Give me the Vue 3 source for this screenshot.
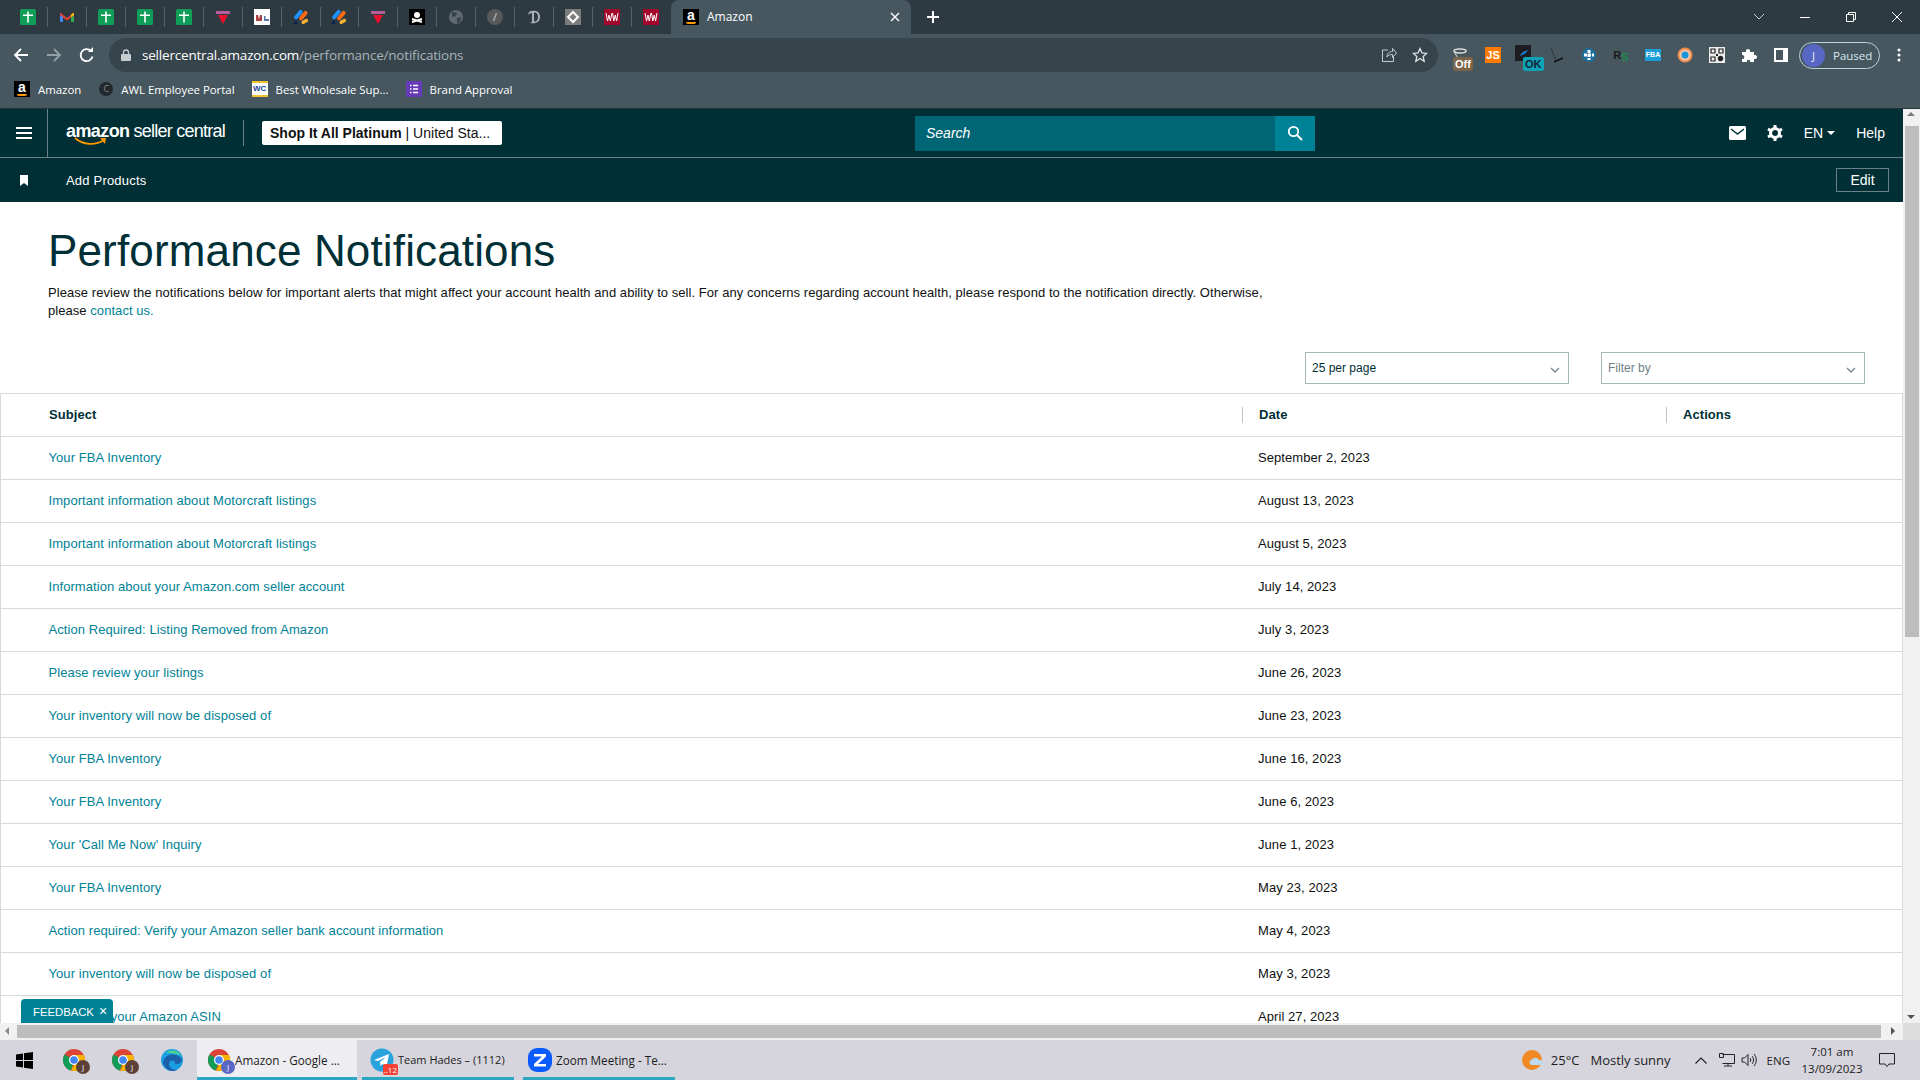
<template>
  <div class="screen">
    <!-- browser chrome -->
    <div class="tabstrip">
      <div class="pinned">
        <div v-for="(t, i) in pinnedTabs" :key="i" class="pin">
          <svg width="16" height="16" viewBox="0 0 16 16">
            <template v-if="t === 'sheet'">
              <rect width="16" height="16" rx="1.5" fill="#0f9d58" />
              <path d="M7.200 2.500h1.600v3H13v1.600H8.800v6.400H7.200V7.100H3V5.500h4.200z" fill="#fff" />
            </template>
            <template v-else-if="t === 'gmail'">
              <path d="M1 4v9h3V7z" fill="#4285f4" /><path d="M15 4v9h-3V7z" fill="#34a853" />
              <path d="M1 3.500 8 9l7-5.500V6L8 11.500 1 6z" fill="#ea4335" />
              <path d="M12 5.500 15 3.500V6l-3 2.300z" fill="#fbbc04" />
            </template>
            <template v-else-if="t === 'tri'">
              <rect x="1" y="2" width="14" height="3" fill="#b45f9a" />
              <path d="M3 6h10l-5 9z" fill="#e8112d" />
            </template>
            <template v-else-if="t === 'wl'">
              <rect width="16" height="16" fill="#fff" />
              <path d="M2 6h2l1 4 1-4h2v6H2z" fill="#a44" /><path d="M10 7h1.500v3H15v2h-5z" fill="#57a" />
            </template>
            <template v-else-if="t === 'jira'">
              <rect x="0" y="4" width="11" height="4" rx="2" transform="rotate(-50 5 6)" fill="#1e90ff" />
              <rect x="5" y="5" width="11" height="4" rx="2" transform="rotate(-50 10 7)" fill="#ff6a13" />
              <rect x="8" y="11" width="7" height="3.500" rx="1.700" transform="rotate(-30 11 12)" fill="#f9b233" />
              <path d="M0 15l3-4 2 4z" fill="#10204f" />
            </template>
            <template v-else-if="t === 'skull'">
              <rect width="16" height="16" fill="#000" />
              <circle cx="8" cy="6" r="3" fill="#fff" /><path d="M3 10l10 3M13 10L3 13" stroke="#fff" stroke-width="2" />
            </template>
            <template v-else-if="t === 'globe'">
              <circle cx="8" cy="8" r="7" fill="#5f6a70" />
              <path d="M4 3l5 1-1 3-4 1zM9 9l4-1-1 5-3 1z" fill="#36434a" />
            </template>
            <template v-else-if="t === 'ital'">
              <circle cx="8" cy="8" r="8" fill="#57595a" /><path d="M9.500 4 6.500 12" stroke="#aaa" stroke-width="1.400" />
            </template>
            <template v-else-if="t === 'dee'">
              <path d="M5 2c6-1 9 1 9 6s-4 7-10 6l2-1V4C4 4 3 5 2.500 6 2 4 3 2.500 5 2z" fill="#aab2b6" />
              <path d="M8 3.500v9c3 0 4-2 4-4.500S11 3.500 8 3.500z" fill="#2e3a41" />
            </template>
            <template v-else-if="t === 'diamond'">
              <rect width="16" height="16" fill="#7c7c7c" />
              <path d="M8 3l5 5-5 5-5-5z" fill="none" stroke="#fff" stroke-width="2" />
            </template>
            <template v-else-if="t === 'vw'">
              <rect width="16" height="16" fill="#a3082c" />
              <path d="M2 4l1.500 8L5 6l1.300 6L8 4M8.500 4l1.300 8 1.500-6 1.300 6L14 4" stroke="#fff" stroke-width="1" fill="none" />
            </template>
          </svg>
        </div>
      </div>
      <div class="tab-active">
        <span class="a-fav"><b>a</b><i></i></span>
        <span class="tab-title">Amazon</span>
        <svg class="tab-close" width="10" height="10" viewBox="0 0 10 10"><path d="M1 1l8 8M9 1l-8 8" stroke="#fff" stroke-width="1.400" /></svg>
      </div>
      <svg class="tab-new" width="14" height="14" viewBox="0 0 14 14"><path d="M7 1v12M1 7h12" stroke="#fff" stroke-width="2" /></svg>
      <div class="win-controls">
        <svg width="46" height="14" viewBox="0 0 46 14"><path d="M18 4l5 5 5-5" stroke="#c6ccd0" fill="none" /></svg>
        <svg width="46" height="14" viewBox="0 0 46 14"><path d="M18 7.500h10" stroke="#fff" /></svg>
        <svg width="46" height="14" viewBox="0 0 46 14"><path d="M18.500 4.500h7v7h-7zM20.500 4.500v-2h7v7h-2" stroke="#fff" fill="none" /></svg>
        <svg width="46" height="14" viewBox="0 0 46 14"><path d="M18 2l10 10M28 2L18 12" stroke="#fff" /></svg>
      </div>
    </div>

    <div class="toolbar">
      <div class="nav-btns">
        <svg width="16" height="16" viewBox="0 0 16 16"><path d="M15 8H2M8 2L2 8l6 6" stroke="#fff" stroke-width="1.800" fill="none" /></svg>
        <svg width="16" height="16" viewBox="0 0 16 16"><path d="M1 8h13M8 2l6 6-6 6" stroke="#93a0a6" stroke-width="1.800" fill="none" /></svg>
        <svg width="16" height="16" viewBox="0 0 16 16"><path d="M13.500 9.500A6 6 0 1 1 12 4" stroke="#fff" stroke-width="1.800" fill="none" /><path d="M9 5h5V0z" fill="#fff" /></svg>
      </div>
      <div class="omnibox">
        <svg class="lock" width="10" height="12" viewBox="0 0 10 12"><path d="M2.500 5V3.500a2.500 2.500 0 0 1 5 0V5" stroke="#c5ccd0" fill="none" stroke-width="1.300" /><rect y="5" width="10" height="7" rx="1" fill="#c5ccd0" /></svg>
        <span class="url"><span class="url-host">sellercentral.amazon.com</span>/performance/notifications</span>
        <svg class="omni-ico" width="16" height="16" viewBox="0 0 16 16"><path d="M7 3H1.500v11.500h11V10M6 10c0-4 2.500-5.500 5.500-5.500V1.500L15.500 6l-4 4.500V7.500C9 7.500 7 8 6 10z" stroke="#c5ccd0" fill="none" /></svg>
        <svg class="omni-ico" width="16" height="16" viewBox="0 0 16 16"><path d="M8 1.500l2 4.400 4.700.5-3.500 3.200 1 4.700L8 11.500l-4.200 2.800 1-4.700L1.300 6.400 6 5.900z" stroke="#dfe3e5" stroke-width="1.300" fill="none" /></svg>
      </div>
      <div class="ext-row">
        <div class="ext"><svg width="16" height="16" viewBox="0 0 16 16"><ellipse cx="7" cy="4" rx="6" ry="2" fill="none" stroke="#ddd" stroke-width="1.500" /><path d="M1 5l4 6h4" stroke="#ddd" fill="none" /></svg><span class="ext-badge off">Off</span></div>
        <div class="ext js">JS</div>
        <div class="ext"><span class="ok-sq"><svg width="16" height="16" viewBox="0 0 16 16"><path d="M5 11c1-3 4-5 8-6-2 3-4 5-8 6z" fill="#1f7fd0" /></svg></span><span class="ext-badge ok">OK</span></div>
        <div class="ext"><svg width="16" height="16" viewBox="0 0 16 16"><path d="M2 1l5 13" stroke="#333" /><path d="M5 15l9-4" stroke="#111" stroke-width="1.500" /></svg></div>
        <div class="ext"><svg width="16" height="16" viewBox="0 0 16 16"><circle cx="8" cy="8" r="7" fill="#1f6d9b" /><path d="M8 3v10M3 8h10" stroke="#fff" stroke-width="3" stroke-dasharray="3 1" /></svg></div>
        <div class="ext rs">R<em>S</em></div>
        <div class="ext fba">FBA</div>
        <div class="ext"><svg width="16" height="16" viewBox="0 0 16 16"><circle cx="8" cy="8" r="7.500" fill="#ee8c50" /><circle cx="8" cy="8" r="5.500" fill="#f3c7a8" /><circle cx="8" cy="8" r="3.500" fill="#1c95d8" /></svg></div>
        <div class="ext"><svg width="16" height="16" viewBox="0 0 16 16"><rect width="16" height="16" fill="#eee" /><path d="M2 2h4v4H2zM10 2h4v4h-4zM2 10h4v4H2z" fill="none" stroke="#222" stroke-width="1.200" /><circle cx="11.500" cy="11.500" r="2.700" fill="#222" /><path d="M7 7h2v2H7z" fill="#222" /></svg></div>
        <div class="ext"><svg width="16" height="16" viewBox="0 0 16 16"><path d="M1 5h4c-1-4 5-4 4 0h4v3c4-1 4 5 0 4v3H9c1-3-4-3-3 0H1v-3c3 1 3-5 0-4z" fill="#fff" /></svg></div>
        <div class="ext"><svg width="14" height="14" viewBox="0 0 14 14"><rect width="14" height="14" fill="#fff" /><rect x="2" y="2" width="7" height="10" fill="#46575f" /></svg></div>
      </div>
      <div class="paused"><span class="avatar">J</span><span>Paused</span></div>
      <svg class="kebab" width="4" height="14" viewBox="0 0 4 14"><circle cx="2" cy="2" r="1.500" fill="#fff" /><circle cx="2" cy="7" r="1.500" fill="#fff" /><circle cx="2" cy="12" r="1.500" fill="#fff" /></svg>
    </div>

    <div class="bookmarks">
      <div class="bm"><span class="a-fav"><b>a</b><i></i></span>Amazon</div>
      <div class="bm"><span class="bm-c">C</span>AWL Employee Portal</div>
      <div class="bm"><span class="bm-wc">WC</span>Best Wholesale Sup...</div>
      <div class="bm">
        <svg width="16" height="16" viewBox="0 0 16 16"><rect width="16" height="16" rx="1" fill="#673ab7" /><path d="M7 4.500h5M7 8h5M7 11.500h5M4 4.500h1.500M4 8h1.500M4 11.500h1.500" stroke="#fff" stroke-width="1.500" /></svg>
        Brand Approval
      </div>
    </div>

    <!-- web page -->
    <div class="viewport">
      <div class="page-wrap">
        <main class="page">
          <header class="topbar">
            <div class="hamburger">
              <svg width="16" height="14" viewBox="0 0 16 14"><path d="M0 2h16M0 7h16M0 12h16" stroke="#fff" stroke-width="2" /></svg>
            </div>
            <div class="logo">
              <span class="logo-amz">amazon<svg class="smile" width="34" height="9" viewBox="0 0 34 9"><path d="M1 1c8 7 20 8 29 2" stroke="#f90" stroke-width="1.800" fill="none" /><path d="M26 1l6 0-1 6z" fill="#f90" /></svg></span>
              <span class="logo-sc">seller central</span>
            </div>
            <div class="topbar-div"></div>
            <div class="account"><b>Shop It All Platinum</b> | United Sta...</div>
            <div class="search">
              <span class="search-input">Search</span>
              <span class="search-btn"><svg width="16" height="16" viewBox="0 0 16 16"><circle cx="6.500" cy="6.500" r="4.700" stroke="#fff" stroke-width="1.800" fill="none" /><path d="M10 10l5 5" stroke="#fff" stroke-width="2" /></svg></span>
            </div>
            <div class="top-right">
              <svg width="17" height="14" viewBox="0 0 17 14"><rect width="17" height="14" rx="1.500" fill="#fff" /><path d="M2 3l6.500 5L15 3" stroke="#002f36" stroke-width="1.400" fill="none" /></svg>
              <svg width="18" height="18" viewBox="0 0 18 18"><circle cx="9" cy="9" r="4.500" fill="none" stroke="#fff" stroke-width="3" /><path d="M9 1v3M9 14v3M2 5l2.600 1.500M13.400 11.500 16 13M2 13l2.600-1.500M13.400 6.500 16 5" stroke="#fff" stroke-width="3" /></svg>
              <span class="lang">EN<i class="caret"></i></span>
              <span>Help</span>
            </div>
          </header>
          <nav class="subnav">
            <svg class="bookmark" width="8" height="11" viewBox="0 0 8 11"><path d="M0 0h8v11L4 8l-4 3z" fill="#fff" /></svg>
            <span class="add-products">Add Products</span>
            <span class="edit">Edit</span>
          </nav>

          <section class="intro">
            <h1>Performance Notifications</h1>
            <p>
              Please review the notifications below for important alerts that might affect your account health and ability to sell. For any concerns regarding account health, please respond to the notification directly. Otherwise, please
              <a>contact us.</a>
            </p>
          </section>

          <div class="filters">
            <div class="select">25 per page<svg width="10" height="6" viewBox="0 0 10 6"><path d="M1 1l4 4 4-4" stroke="#7c9095" stroke-width="1.500" fill="none" /></svg></div>
            <div class="select muted">Filter by<svg width="10" height="6" viewBox="0 0 10 6"><path d="M1 1l4 4 4-4" stroke="#7c9095" stroke-width="1.500" fill="none" /></svg></div>
          </div>

          <div class="table">
            <div class="row head">
              <div class="cell">Subject</div>
              <div class="cell"><span class="th-line">Date</span></div>
              <div class="cell"><span class="th-line">Actions</span></div>
            </div>
            <div v-for="(n, i) in notifications" :key="i" class="row">
              <div class="cell"><a>{{ n.subject }}</a></div>
              <div class="cell">{{ n.date }}</div>
              <div class="cell"></div>
            </div>
          </div>
        </main>
        <div class="vscroll">
          <i class="arrow up"></i>
          <div class="vthumb"></div>
          <i class="arrow down"></i>
        </div>
        <div class="feedback">FEEDBACK <span>×</span></div>
      </div>
      <div class="hscroll">
        <i class="arrow left"></i>
        <div class="hthumb"></div>
        <i class="arrow right"></i>
        <div class="corner"></div>
      </div>
    </div>

    <!-- windows taskbar -->
    <footer class="taskbar">
      <svg class="win-logo" width="17" height="17" viewBox="0 0 17 17"><path d="M0 2.500 7 1.500v6.500H0zM8 1.300 17 0v8H8zM0 9h7v6.500L0 14.500zM8 9h9v8L8 15.700z" fill="#000" /></svg>
      <span class="tb-icon"><svg width="24" height="24" viewBox="0 0 24 24"><use href="#chrome-ico" /></svg><span class="tb-av brown">J</span></span>
      <span class="tb-icon"><svg width="24" height="24" viewBox="0 0 24 24"><use href="#chrome-ico" /></svg><span class="tb-av brown">J</span></span>
      <span class="tb-icon">
        <svg width="24" height="24" viewBox="0 0 24 24"><circle cx="12" cy="12" r="11" fill="#1b9de2" /><path d="M3 15c1-9 12-11 18-5 2 3 0 6-4 6-3 0-3-2-2-3-4-2-8 2-5 6 1 2 4 3 7 3-6 3-12-1-14-7z" fill="#1a5fa8" /><path d="M6 5c5-4 12-3 15 3-4-3-11-3-15-3z" fill="#4fd28a" /></svg>
      </span>
      <div class="tb-app active">
        <span class="tb-icon small"><svg width="24" height="24" viewBox="0 0 24 24"><use href="#chrome-ico" /></svg><span class="tb-av">J</span></span>
        <span>Amazon - Google ...</span>
      </div>
      <div class="tb-app tele">
        <span class="tb-icon small">
          <svg width="24" height="24" viewBox="0 0 24 24"><circle cx="12" cy="12" r="11.500" fill="#2aa3dc" /><path d="M4 12l15-6-2.500 13-4-3-2 2-.5-4 6-5-8 4z" fill="#fff" /></svg>
          <span class="tb-count">..12</span>
        </span>
        <span>Team Hades – (1112)</span>
      </div>
      <div class="tb-app zoom">
        <span class="tb-icon small">
          <svg width="24" height="24" viewBox="0 0 24 24"><rect width="24" height="24" rx="9" fill="#0b5cff" /><path d="M6 6h12v2.500L10 16h8v2.500H6V16l8-7.500H6z" fill="#fff" /></svg>
        </span>
        <span>Zoom Meeting - Te...</span>
      </div>
      <div class="tray">
        <svg width="22" height="22" viewBox="0 0 22 22"><circle cx="11" cy="11" r="10" fill="#f08a24" /><path d="M10 16a3 3 0 0 1 1-5.500 4 4 0 0 1 7 0.500 3 3 0 0 1 3 5z" fill="#bcd9ef" /></svg>
        <span class="temp">25°C</span>
        <span class="sky">Mostly sunny</span>
        <svg class="t-chev" width="12" height="7" viewBox="0 0 12 7"><path d="M0.500 6.500 6 1l5.500 5.500" stroke="#222" stroke-width="1.200" fill="none" /></svg>
        <svg class="t-net" width="16" height="14" viewBox="0 0 16 14"><path d="M3.500 1.500h12v9h-12M9 10.500v2M5 13h8M.5.500h4v4h-4z" stroke="#222" fill="none" /></svg>
        <svg class="t-vol" width="16" height="14" viewBox="0 0 16 14"><path d="M1 5h2.500L7 1.500v11L3.500 9H1zM9 5c1 1 1 3 0 4M11 3c2 2 2 6 0 8M13 1c3 3 3 9 0 12" stroke="#222" fill="none" /></svg>
        <span class="eng">ENG</span>
        <div class="clock"><span>7:01 am</span><span>13/09/2023</span></div>
        <svg class="t-note" width="16" height="15" viewBox="0 0 16 15"><path d="M.5.500h15v10.500H10L8 13.500 6 11H.5z" stroke="#222" fill="none" /></svg>
      </div>
    </footer>

    <svg width="0" height="0" class="defs">
      <defs>
        <g id="chrome-ico">
          <circle cx="12" cy="12" r="11" fill="#db4437" />
          <path d="M12 12 2.500 6.500A11 11 0 0 0 9 22.600z" fill="#0f9d58" />
          <path d="M12 7h9.700A11 11 0 0 1 9 22.600L14 13z" fill="#f4b400" />
          <circle cx="12" cy="12" r="5" fill="#fff" />
          <circle cx="12" cy="12" r="3.800" fill="#4285f4" />
        </g>
      </defs>
    </svg>
  </div>
</template>

<script setup>
const pinnedTabs = ['sheet', 'gmail', 'sheet', 'sheet', 'sheet', 'tri', 'wl', 'jira', 'jira', 'tri', 'skull', 'globe', 'ital', 'dee', 'diamond', 'vw', 'vw']

const notifications = [
  { subject: 'Your FBA Inventory', date: 'September 2, 2023' },
  { subject: 'Important information about Motorcraft listings', date: 'August 13, 2023' },
  { subject: 'Important information about Motorcraft listings', date: 'August 5, 2023' },
  { subject: 'Information about your Amazon.com seller account', date: 'July 14, 2023' },
  { subject: 'Action Required: Listing Removed from Amazon', date: 'July 3, 2023' },
  { subject: 'Please review your listings', date: 'June 26, 2023' },
  { subject: 'Your inventory will now be disposed of', date: 'June 23, 2023' },
  { subject: 'Your FBA Inventory', date: 'June 16, 2023' },
  { subject: 'Your FBA Inventory', date: 'June 6, 2023' },
  { subject: "Your 'Call Me Now' Inquiry", date: 'June 1, 2023' },
  { subject: 'Your FBA Inventory', date: 'May 23, 2023' },
  { subject: 'Action required: Verify your Amazon seller bank account information', date: 'May 4, 2023' },
  { subject: 'Your inventory will now be disposed of', date: 'May 3, 2023' },
  { subject: 'Issue with your Amazon ASIN', date: 'April 27, 2023' },
]
</script>

<style>
html, body { margin: 0; overflow: hidden; }
</style>

<style scoped>
.screen {
  width: 1920px;
  height: 1080px;
  display: flex;
  flex-direction: column;
  overflow: hidden;
  font-family: "Liberation Sans", Arial, sans-serif;
  background: #fff;
}
.defs { position: absolute; }

/* chrome */
.tabstrip {
  height: 34px;
  flex: none;
  background: #2e3a41;
  display: flex;
  align-items: center;
}
.pinned { display: flex; padding-left: 9px; width: 671px; box-sizing: border-box; }
.pin {
  width: 39px;
  height: 20px;
  display: flex;
  align-items: center;
  justify-content: center;
  border-right: 1px solid #56636a;
  box-sizing: border-box;
}
.pin:last-child { border-right: none; }
.tab-active {
  width: 240px;
  height: 34px;
  background: #46575f;
  border-radius: 8px 8px 0 0;
  display: flex;
  align-items: center;
  padding-left: 12px;
  box-sizing: border-box;
  color: #fff;
  font: 12px "Open Sans", sans-serif;
}
.tab-title { margin-left: 8px; flex: 1; padding-bottom: 2px; }
.tab-close { margin-right: 11px; }
.tab-new { margin-left: 15px; }
.win-controls { margin-left: auto; display: flex; }
.a-fav {
  width: 16px;
  height: 16px;
  background: #000;
  color: #fff;
  display: inline-block;
  position: relative;
  font: bold 14px/13px "Liberation Sans", sans-serif;
  text-align: center;
  flex: none;
}
.a-fav b { display: block; font-weight: bold; }
.a-fav i {
  position: absolute;
  left: 3px;
  right: 3px;
  bottom: 1px;
  height: 2px;
  background: #f90;
  border-radius: 0 0 6px 6px;
}
.toolbar {
  height: 38px;
  flex: none;
  box-sizing: border-box;
  background: #46575f;
  display: flex;
  align-items: center;
  padding-top: 4px;
}
.nav-btns { display: flex; gap: 17px; width: 109px; padding-left: 13px; box-sizing: border-box; }
.omnibox {
  width: 1329px;
  height: 34px;
  border-radius: 17px;
  background: #36444b;
  display: flex;
  align-items: center;
  box-sizing: border-box;
  padding-left: 12px;
  padding-right: 10px;
}
.lock { margin-right: 11px; }
.url { font: 13.5px/32px "Open Sans", sans-serif; color: #a9b3b8; flex: 1; letter-spacing: -0.2px; }
.url-host { color: #fff; }
.omni-ico { margin-left: 15px; }
.ext-row { display: flex; margin-left: 7px; }
.ext {
  width: 32px;
  height: 32px;
  position: relative;
  display: flex;
  align-items: center;
  justify-content: center;
}
.ext-badge {
  position: absolute;
  left: 10px;
  bottom: 0;
  font: bold 11px/14px "Liberation Sans", sans-serif;
  color: #fff;
  padding: 0 2px;
  border-radius: 2px;
}
.ext-badge.off { background: #7b6448; left: 8px; }
.ext-badge.ok { background: #0fa3b8; color: #123; left: 14px; }
.ok-sq { width: 16px; height: 16px; background: #1c1c22; margin-top: -4px; margin-right: 4px; }
.js {
  font: bold 11px/16px "Liberation Sans", sans-serif;
  color: #fff;
  background: #ff7b00 content-box;
  padding: 8px;
  box-sizing: border-box;
  text-align: center;
}
.rs { font: bold 11px "Liberation Sans", sans-serif; color: #1a1a1a; }
.rs em { color: #1c8a4d; font-style: normal; margin-top: 4px; }
.fba {
  font: bold 7px/12px "Liberation Sans", sans-serif;
  color: #fff;
  background: #1c9fd8 content-box;
  padding: 10px 8px;
  box-sizing: border-box;
}
.paused {
  margin-left: 2px;
  width: 81px;
  height: 27px;
  box-sizing: border-box;
  border: 1px solid #b8d6e2;
  border-radius: 14px;
  display: flex;
  align-items: center;
  gap: 8px;
  padding-left: 2px;
  color: #d8e8ef;
  font: 11.5px "Open Sans", sans-serif;
}
.avatar {
  width: 23px;
  height: 23px;
  border-radius: 50%;
  background: #5866c4;
  color: #e6e8f8;
  text-align: center;
  line-height: 23px;
}
.kebab { margin-left: 17px; }
.bookmarks {
  height: 37px;
  flex: none;
  box-sizing: border-box;
  background: #46575f;
  border-bottom: 1px solid #23333a;
  display: flex;
  align-items: center;
  padding-left: 14px;
  padding-bottom: 2px;
  color: #fff;
  font: 11.4px "Open Sans", sans-serif;
}
.bm { display: flex; align-items: center; gap: 8px; margin-right: 17px; }
.bm-c {
  width: 14px;
  height: 14px;
  border-radius: 50%;
  background: #22292e;
  color: #888;
  font-size: 9px;
  line-height: 14px;
  text-align: center;
  margin-left: 1px;
}
.bm-wc {
  width: 16px;
  height: 16px;
  box-sizing: border-box;
  background: #fff;
  border-top: 2px solid #f2c230;
  border-bottom: 2px solid #f2c230;
  color: #1a3f95;
  font: bold 8px/12px "Liberation Sans", sans-serif;
  text-align: center;
}

/* page */
.viewport { flex: 1; min-height: 0; display: flex; flex-direction: column; }
.page-wrap { flex: 1; min-height: 0; display: flex; position: relative; }
.page { flex: 1; min-width: 0; overflow: hidden; }
.topbar {
  height: 49px;
  box-sizing: border-box;
  background: #002f36;
  border-bottom: 1px solid #6b8086;
  display: flex;
  align-items: center;
  color: #fff;
}
.hamburger {
  width: 48px;
  height: 48px;
  box-sizing: border-box;
  border-right: 1px solid #6b8086;
  display: flex;
  align-items: center;
  justify-content: center;
}
.logo { margin-left: 18px; width: 177px; display: flex; align-items: baseline; gap: 4px; margin-top: -4px; }
.logo-amz { position: relative; font: bold 18px/24px "Liberation Sans", sans-serif; letter-spacing: -0.6px; }
.smile { position: absolute; left: 8px; top: 18px; }
.logo-sc { font: 18px/24px "Liberation Sans", sans-serif; letter-spacing: -0.75px; }
.topbar-div { width: 1px; height: 26px; background: #6b8086; }
.account {
  margin-left: 18px;
  width: 240px;
  height: 24px;
  box-sizing: border-box;
  background: #fff;
  border-radius: 2px;
  color: #0f1111;
  font-size: 14px;
  line-height: 24px;
  padding-left: 8px;
  white-space: nowrap;
}
.search {
  margin-left: 413px;
  width: 400px;
  height: 35px;
  display: flex;
  background: #006574;
}
.search-input { flex: 1; font: italic 14px/35px "Liberation Sans", sans-serif; padding-left: 11px; }
.search-btn {
  width: 40px;
  background: #008296;
  display: flex;
  align-items: center;
  justify-content: center;
}
.top-right {
  margin-left: auto;
  display: flex;
  align-items: center;
  gap: 20px;
  padding-right: 18px;
  font-size: 14px;
}
.lang { display: flex; align-items: center; margin-right: 1px; }
.caret {
  margin-left: 4px;
  border-top: 4px solid #fff;
  border-left: 4px solid transparent;
  border-right: 4px solid transparent;
}
.subnav {
  height: 44px;
  background: #002f36;
  display: flex;
  align-items: center;
  color: #fff;
  font-size: 14px;
}
.bookmark { margin-left: 20px; }
.add-products { margin-left: 38px; font-size: 13px; letter-spacing: 0.2px; }
.edit {
  margin-left: auto;
  margin-right: 14px;
  width: 53px;
  height: 24px;
  box-sizing: border-box;
  border: 1px solid #6b8086;
  text-align: center;
  line-height: 22px;
}
.intro { padding: 24px 0 0 48px; width: 1225px; }
h1 {
  margin: 0;
  font-size: 44px;
  line-height: 50px;
  font-weight: 400;
  color: #002f36;
  letter-spacing: 0.15px;
}
.intro p {
  margin: 8px 0 0;
  font-size: 13px;
  line-height: 18px;
  color: #0f1111;
  letter-spacing: 0.055px;
}
a { color: #008296; }
.filters {
  display: flex;
  justify-content: flex-end;
  gap: 32px;
  padding-right: 38px;
  margin-top: 32px;
}
.select {
  width: 264px;
  height: 32px;
  box-sizing: border-box;
  border: 1px solid #a6b8ba;
  font-size: 12px;
  line-height: 30px;
  padding: 0 6px;
  color: #002f36;
  display: flex;
  justify-content: space-between;
  align-items: center;
}
.select svg { margin-top: 4px; margin-right: 2px; }
.select.muted { color: #6c7f84; }
.table {
  margin-top: 9px;
  border: 1px solid #d5dbdb;
  border-bottom: none;
  font-size: 13px;
  letter-spacing: 0.07px;
  color: #0f1111;
}
.row {
  display: grid;
  grid-template-columns: 1241px 424px 1fr;
  height: 43px;
  box-sizing: border-box;
  border-bottom: 1px solid #d5dbdb;
  align-items: center;
  padding-bottom: 1px;
}
.row .cell:first-child { padding-left: 47.500px; }
.row .cell:nth-child(2) { padding-left: 16px; }
.head { font-weight: bold; color: #002f36; }
.head .cell:first-child { padding-left: 48px; }
.th-line {
  display: block;
  border-left: 1px solid #b9c4c6;
  padding-left: 16px;
  line-height: 16px;
  margin-left: -16px;
}
.head .cell:nth-child(3) { padding-left: 16px; }
.vscroll {
  width: 17px;
  flex: none;
  background: #f1f1f1;
  display: flex;
  flex-direction: column;
  position: relative;
}
.vthumb { margin: 17px 1px 0 2px; height: 511px; background: #bdbdbd; }
.arrow { position: absolute; width: 0; height: 0; border: 4px solid transparent; }
.arrow.up { top: 3px; left: 4px; border-bottom-color: #7a7a7a; border-top: none; }
.arrow.down { bottom: 4px; left: 4px; border-top-color: #555; border-bottom: none; }
.feedback {
  position: absolute;
  left: 21px;
  bottom: 0;
  width: 92px;
  height: 24px;
  box-sizing: border-box;
  background: #008296;
  border-radius: 4px 4px 0 0;
  color: #fff;
  font-size: 11.3px;
  line-height: 24px;
  padding-left: 12px;
  white-space: nowrap;
}
.feedback span { margin-left: 2px; font-size: 14px; }
.hscroll {
  height: 17px;
  flex: none;
  background: #f1f1f1;
  display: flex;
  position: relative;
}
.hthumb { margin: 2px 0 2px 17px; width: 1864px; height: 13px; background: #bdbdbd; }
.arrow.left { left: 5px; top: 4px; border-right-color: #8a8a8a; border-left: none; }
.arrow.right { left: 1891px; top: 4px; border-left-color: #505050; border-right: none; }
.corner { position: absolute; right: 0; top: 0; width: 17px; height: 17px; background: #dcdcdc; }

/* taskbar */
.taskbar {
  height: 40px;
  flex: none;
  background: #d6d5dd;
  display: flex;
  align-items: center;
  color: #1c1c1c;
  font: 11.7px "Open Sans", sans-serif;
}
.win-logo { margin-left: 16px; margin-right: 29px; }
.tb-icon { position: relative; display: flex; width: 24px; height: 24px; margin-right: 25px; }
.tb-icon:nth-of-type(3) { margin-right: 13px; }
.tb-av {
  position: absolute;
  right: -4px;
  bottom: -2px;
  width: 14px;
  height: 14px;
  border-radius: 50%;
  background: #5866c4;
  color: #fff;
  font-size: 8px;
  line-height: 14px;
  text-align: center;
}
.tb-av.brown { background: #5d4037; }
.tb-app {
  height: 40px;
  box-sizing: border-box;
  border-bottom: 3px solid #2aa5c2;
  display: flex;
  align-items: center;
  padding-top: 2px;
  white-space: nowrap;
}
.tb-app.active { width: 160px; background: #eeeef2; margin-right: 5px; padding-left: 10px; }
.tb-app.tele { width: 152px; margin-right: 9px; padding-left: 8px; font-size: 11px; }
.tb-app.zoom { width: 152px; padding-left: 5px; }
.tb-icon.small { margin-right: 4px; flex: none; }
.tb-count {
  position: absolute;
  right: -4px;
  bottom: -3px;
  background: #f44336;
  color: #fff;
  font-size: 8px;
  line-height: 11px;
  padding: 0 1px;
  border-radius: 2px;
}
.tray { margin-left: auto; display: flex; align-items: center; padding-right: 25px; font-size: 13px; }
.temp { margin-left: 8px; }
.sky { margin-left: 11px; }
.t-chev { margin-left: 24px; }
.t-net { margin-left: 12px; }
.t-vol { margin-left: 6px; }
.eng { margin-left: 10px; font-size: 11.5px; }
.clock {
  margin-left: 12px;
  width: 60px;
  display: flex;
  flex-direction: column;
  align-items: center;
  font-size: 11.5px;
  line-height: 17px;
  white-space: nowrap;
}
.t-note { margin-left: 17px; }
</style>
